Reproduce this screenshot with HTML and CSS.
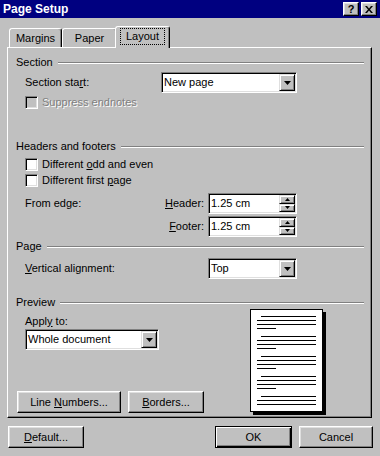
FILE: index.html
```html
<!DOCTYPE html>
<html lang="en">
<head>
    <meta charset="UTF-8">
    <title>Page Setup</title>
    <link rel="stylesheet" href="styles.css">
</head>
<body>

    <!-- Title bar -->
    <div class="titlebar">
        <span class="title">Page Setup</span>
        <div class="title-buttons">
            <span class="tbtn">?</span>
            <span class="tbtn">
                <svg width="8" height="7" viewBox="0 0 8 7"><path d="M0 0h2l2 2.4L6 0h2L5 3.5 8 7H6L4 4.6 2 7H0l3-3.5z"/></svg>
            </span>
        </div>
    </div>

    <!-- Tabs -->
    <div class="tabs">
        <div class="tab tab-margins">Margins</div>
        <div class="tab tab-paper">Paper</div>
        <div class="tab active"><span class="focus">Layout</span></div>
    </div>

    <div class="panel">

        <div class="group-title"><span>Section</span><i class="etch"></i></div>
        <div class="row row-start">
            <span class="label-start">Section sta<u>r</u>t:</span>
            <div class="combo combo-start">
                <span class="val">New page</span>
                <span class="drop"><svg width="7" height="4" viewBox="0 0 7 4"><path d="M0 0h7L3.5 4z"/></svg></span>
            </div>
        </div>
        <div class="check-row row-suppress disabled">
            <span class="box"></span>
            <span>Suppress endnotes</span>
        </div>

        <div class="group-title group-headers"><span>Headers and footers</span><i class="etch"></i></div>
        <div class="check-row row-odd">
            <span class="box"></span>
            <span>Different <u>o</u>dd and even</span>
        </div>
        <div class="check-row row-first">
            <span class="box"></span>
            <span>Different first <u>p</u>age</span>
        </div>
        <div class="row row-edge">
            <span class="label-edge">From edge:</span>
            <span class="label-spin"><u>H</u>eader:</span>
            <div class="spin">
                <span class="val">1.25 cm</span>
                <span class="spin-btns">
                    <span class="sb"><svg width="5" height="3" viewBox="0 0 5 3"><path d="M2.5 0L5 3H0z"/></svg></span>
                    <span class="sb"><svg width="5" height="3" viewBox="0 0 5 3"><path d="M0 0h5L2.5 3z"/></svg></span>
                </span>
            </div>
        </div>
        <div class="row row-edge2">
            <span class="label-edge"></span>
            <span class="label-spin"><u>F</u>ooter:</span>
            <div class="spin">
                <span class="val">1.25 cm</span>
                <span class="spin-btns">
                    <span class="sb"><svg width="5" height="3" viewBox="0 0 5 3"><path d="M2.5 0L5 3H0z"/></svg></span>
                    <span class="sb"><svg width="5" height="3" viewBox="0 0 5 3"><path d="M0 0h5L2.5 3z"/></svg></span>
                </span>
            </div>
        </div>

        <div class="group-title group-page"><span>Page</span><i class="etch"></i></div>
        <div class="row row-valign">
            <span class="label-valign"><u>V</u>ertical alignment:</span>
            <div class="combo combo-valign">
                <span class="val">Top</span>
                <span class="drop"><svg width="7" height="4" viewBox="0 0 7 4"><path d="M0 0h7L3.5 4z"/></svg></span>
            </div>
        </div>

        <div class="group-title group-preview"><span>Preview</span><i class="etch"></i></div>
        <div class="preview">
            <div class="preview-left">
                <div class="apply-label">Appl<u>y</u> to:</div>
                <div class="combo combo-apply">
                    <span class="val">Whole document</span>
                    <span class="drop"><svg width="7" height="4" viewBox="0 0 7 4"><path d="M0 0h7L3.5 4z"/></svg></span>
                </div>
                <div class="panel-buttons">
                    <div class="btn btn-lines"><span>Line <u>N</u>umbers...</span></div>
                    <div class="btn btn-borders"><span><u>B</u>orders...</span></div>
                </div>
            </div>

            <!-- Miniature page -->
            <div class="page">
                <div class="para"><i class="ln ind"></i><i class="ln"></i><i class="ln"></i><i class="ln short"></i></div>
                <div class="para"><i class="ln ind"></i><i class="ln"></i><i class="ln"></i><i class="ln short"></i></div>
                <div class="para"><i class="ln ind"></i><i class="ln"></i><i class="ln"></i><i class="ln short"></i></div>
                <div class="para"><i class="ln ind"></i><i class="ln"></i><i class="ln"></i><i class="ln short"></i></div>
                <div class="para"><i class="ln ind"></i><i class="ln"></i><i class="ln"></i></div>
            </div>
        </div>
    </div>

    <!-- Dialog buttons -->
    <div class="footer">
        <div class="btn btn-default"><span><u>D</u>efault...</span></div>
        <div class="spacer"></div>
        <div class="btn btn-ok">OK</div>
        <div class="btn btn-cancel">Cancel</div>
    </div>

</body>
</html>
```

FILE: styles.css
```css
body {
    margin: 0;
    width: 380px;
    height: 456px;
    overflow: hidden;
    background-color: #c0c0c0;
    font-family: "Liberation Sans", Arial, sans-serif;
    font-size: 11px;
    line-height: 13px;
    color: #000;
}

u {
    text-decoration: underline;
    text-underline-offset: 1px;
}

/* Title bar */
.titlebar {
    height: 18px;
    background-color: #000080;
    color: #fff;
    display: flex;
    align-items: center;
    justify-content: space-between;
    padding: 0 3px;
}

.title {
    font-weight: bold;
    font-size: 12px;
}

.title-buttons {
    display: flex;
    gap: 2px;
}

.tbtn {
    width: 16px;
    height: 14px;
    box-sizing: border-box;
    background-color: #c0c0c0;
    border: 1px solid;
    border-color: #fff #000 #000 #fff;
    box-shadow: inset -1px -1px #808080, inset 1px 1px #dfdfdf;
    display: flex;
    align-items: center;
    justify-content: center;
    color: #000;
    font-weight: bold;
    font-size: 11px;
}

/* Tabs */
.tabs {
    display: flex;
    align-items: flex-end;
    height: 21px;
    margin-top: 8px;
    padding-left: 9px;
}

.tab {
    height: 19px;
    box-sizing: border-box;
    border: 1px solid;
    border-bottom: none;
    border-color: #fff #000 transparent #fff;
    border-radius: 3px 3px 0 0;
    box-shadow: inset -1px 0 #808080;
    background-color: #c0c0c0;
    display: flex;
    align-items: center;
    justify-content: center;
    padding-top: 1px;
}

.tab-margins {
    width: 53px;
}

.tab-paper {
    width: 55px;
}

.tab.active {
    width: 55px;
    height: 22px;
    margin-left: -2px;
    margin-bottom: -1px;
    padding-top: 0;
    padding-bottom: 2px;
    position: relative;
    z-index: 1;
}

.focus {
    padding: 2px 6px;
    outline: 1px dotted #000;
    outline-offset: -1px;
}

/* Tab panel */
.panel {
    width: 365px;
    height: 371px;
    box-sizing: border-box;
    margin-left: 7px;
    border: 1px solid;
    border-color: #fff #000 #000 #fff;
    box-shadow: inset -1px -1px #808080;
    padding: 8px 7px 0 8px;
    display: flex;
    flex-direction: column;
}

.group-title {
    display: flex;
    align-items: center;
    height: 13px;
}

.etch {
    flex: 1;
    height: 0;
    margin-left: 5px;
    border-top: 1px solid #808080;
    border-bottom: 1px solid #fff;
}

.group-headers {
    margin-top: 31px;
}

.group-page {
    margin-top: 3px;
}

.group-preview {
    margin-top: 17px;
}

.row {
    display: flex;
    align-items: center;
    height: 21px;
    padding-left: 9px;
}

.row-start {
    margin-top: 3px;
}

.row-edge {
    margin-top: 6px;
}

.row-edge2 {
    margin-top: 2px;
}

.row-valign {
    margin-top: 5px;
}

.label-start {
    width: 136px;
}

.label-edge {
    width: 140px;
}

.label-spin {
    width: 43px;
    box-sizing: border-box;
    padding-right: 4px;
    text-align: right;
}

.label-valign {
    width: 183px;
}

/* Check boxes */
.check-row {
    display: flex;
    align-items: center;
    gap: 4px;
    height: 13px;
    padding-left: 9px;
}

.row-suppress {
    margin-top: 3px;
}

.row-odd {
    margin-top: 5px;
}

.row-first {
    margin-top: 3px;
}

.box {
    width: 13px;
    height: 13px;
    box-sizing: border-box;
    background-color: #fff;
    border: 1px solid;
    border-color: #808080 #fff #fff #808080;
    box-shadow: inset 1px 1px #000, inset -1px -1px #dfdfdf;
}

.disabled {
    color: #808080;
    text-shadow: 1px 1px #fff;
}

.disabled .box {
    background-color: #c0c0c0;
}

/* Combo boxes and spinners */
.combo,
.spin {
    height: 21px;
    box-sizing: border-box;
    background-color: #fff;
    border: 1px solid;
    border-color: #808080 #fff #fff #808080;
    box-shadow: inset 1px 1px #000, inset -1px -1px #dfdfdf;
    padding: 1px;
    display: flex;
    align-items: center;
}

.val {
    flex: 1;
    padding-left: 1px;
}

.drop,
.sb {
    box-sizing: border-box;
    background-color: #c0c0c0;
    border: 1px solid;
    border-color: #dfdfdf #000 #000 #dfdfdf;
    box-shadow: inset 1px 1px #fff, inset -1px -1px #808080;
    display: flex;
    align-items: center;
    justify-content: center;
}

.drop {
    width: 16px;
    height: 17px;
}

.combo-start {
    width: 136px;
}

.combo-valign {
    width: 89px;
}

.spin {
    width: 89px;
}

.spin-btns {
    width: 16px;
    height: 17px;
    display: flex;
    flex-direction: column;
}

.sb {
    flex: 1;
}

/* Preview */
.preview {
    flex: 1;
    display: flex;
}

.preview-left {
    flex: 1;
    display: flex;
    flex-direction: column;
    align-items: flex-start;
    padding-bottom: 4px;
}

.apply-label {
    margin: 6px 0 0 9px;
}

.combo-apply {
    width: 134px;
    margin: 1px 0 0 9px;
}

.panel-buttons {
    margin-top: auto;
    margin-left: 1px;
    display: flex;
    gap: 7px;
}

.page {
    width: 73px;
    height: 103px;
    box-sizing: border-box;
    margin-right: 41px;
    background-color: #fff;
    border: 1px solid #000;
    box-shadow: 3px 3px 0 #000;
    padding: 6px 6px 0 6px;
}

.para {
    display: flex;
    flex-direction: column;
    gap: 3px;
    margin-bottom: 7px;
}

.ln {
    display: block;
    width: 59px;
    height: 1px;
    background-color: #000;
}

.ln.ind {
    width: 55px;
    margin-left: 4px;
}

.ln.short {
    width: 19px;
}

/* Push buttons */
.btn {
    height: 22px;
    box-sizing: border-box;
    background-color: #c0c0c0;
    border: 1px solid;
    border-color: #fff #000 #000 #fff;
    box-shadow: inset -1px -1px #808080, inset 1px 1px #dfdfdf;
    display: flex;
    align-items: center;
    justify-content: center;
}

.btn-lines {
    width: 104px;
}

.btn-borders {
    width: 76px;
}

.footer {
    display: flex;
    margin-top: 8px;
    padding: 0 7px 0 8px;
}

.spacer {
    flex: 1;
}

.btn-default {
    width: 76px;
}

.btn-ok {
    width: 77px;
    border-color: #000;
    box-shadow: inset 1px 1px #fff, inset -1px -1px #000, inset -2px -2px #808080;
}

.btn-cancel {
    width: 74px;
    margin-left: 7px;
}
```
